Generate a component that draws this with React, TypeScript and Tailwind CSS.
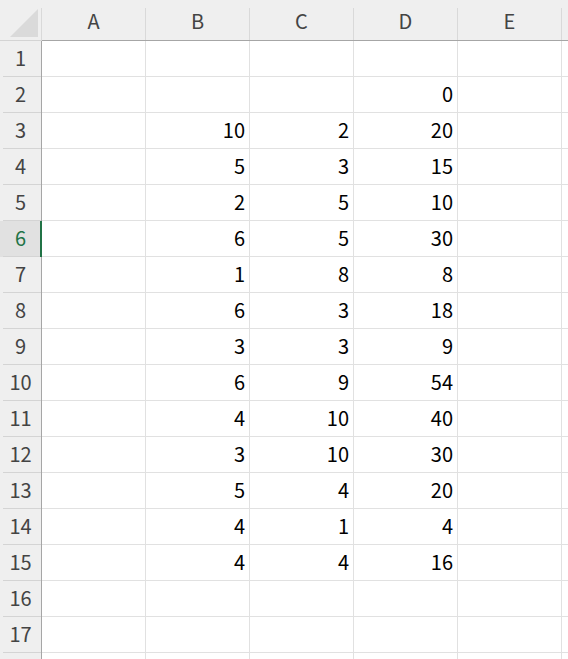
const cols = ["A", "B", "C", "D", "E"];

const data: Record<number, (number | null)[]> = {
  2: [null, null, null, 0, null],
  3: [null, 10, 2, 20, null],
  4: [null, 5, 3, 15, null],
  5: [null, 2, 5, 10, null],
  6: [null, 6, 5, 30, null],
  7: [null, 1, 8, 8, null],
  8: [null, 6, 3, 18, null],
  9: [null, 3, 3, 9, null],
  10: [null, 6, 9, 54, null],
  11: [null, 4, 10, 40, null],
  12: [null, 3, 10, 30, null],
  13: [null, 5, 4, 20, null],
  14: [null, 4, 1, 4, null],
  15: [null, 4, 4, 16, null],
};

// row 18 is only a sliver at the bottom edge, drawn without its label
const rows = Array.from({ length: 18 }, (_, i) => i + 1);
const activeRow = 6;

export default function App() {
  return (
    <div
      className="h-[659px] w-[568px] overflow-hidden bg-white text-[20px] leading-none"
      style={{ fontFamily: '"Noto Sans CJK JP", "Noto Sans", sans-serif' }}
    >
      {/* column headers */}
      <div className="flex h-[41px] bg-[#efefef]">
        <div className="flex w-[42px] shrink-0 border-b border-[#d4d4d4]">
          <div className="flex flex-1 items-start justify-end pt-[9px] pr-[3px]">
            <svg width="28" height="28" viewBox="0 0 28 28">
              <polygon points="28,0 28,28 0,28" fill="#dadada" />
            </svg>
          </div>
          <div className="mt-2 w-px bg-[#d9d9d9]" />
        </div>
        {cols.map((c) => (
          <div key={c} className="flex w-[104px] shrink-0 border-b border-[#a6a6a6]">
            <div className="flex flex-1 items-center justify-center pt-px text-[#444]">{c}</div>
            <div className="mt-2 w-px bg-[#d9d9d9]" />
          </div>
        ))}
        <div className="flex-1 border-b border-[#a6a6a6]" />
      </div>

      {rows.map((r) => {
        const active = r === activeRow;
        const vals = data[r] ?? [null, null, null, null, null];
        return (
          <div key={r} className="flex h-9">
            <div
              className={`flex w-[42px] shrink-0 flex-col ${
                active ? "border-r-2 border-[#217346] bg-[#e1e1e1]" : "border-r border-[#a6a6a6] bg-[#efefef]"
              }`}
            >
              <div
                className={`flex h-[35px] items-center justify-center pb-px ${
                  active ? "pl-px text-[#217346]" : "text-[#444]"
                }`}
              >
                {r < 18 ? r : null}
              </div>
              <div className="ml-[3px] h-px bg-[#d4d4d4]" />
            </div>
            {vals.map((v, i) => (
              <div
                key={i}
                className="flex w-[104px] shrink-0 items-center justify-end border-r border-b border-[#e1e1e1] pr-[4px] pb-px text-black"
              >
                {v}
              </div>
            ))}
            <div className="flex-1 border-b border-[#e1e1e1]" />
          </div>
        );
      })}
    </div>
  );
}
